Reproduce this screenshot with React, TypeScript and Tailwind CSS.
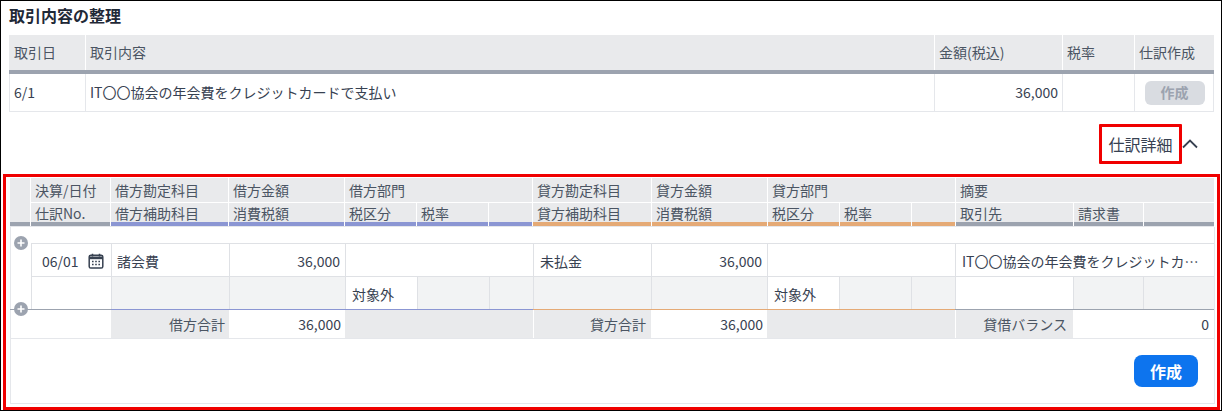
const FONT = "font-['Noto_Sans_CJK_JP','Noto_Sans',sans-serif]";

const Plus = ({ className }: { className: string }) => (
  <svg viewBox="0 0 14 14" className={`absolute w-[14px] h-[14px] ${className}`}>
    <circle cx="7" cy="7" r="7" fill="#9ca3af" />
    <path d="M7 3.5v7M3.5 7h7" stroke="#fff" strokeWidth="1.6" />
  </svg>
);

const Calendar = () => (
  <svg viewBox="0 0 16 16" className="w-4 h-4 text-[#374151]" fill="none">
    <rect x="1.2" y="2.2" width="13.6" height="12.8" rx="1.6" stroke="currentColor" strokeWidth="1.5" />
    <path d="M1.2 3.5h13.6v2.7H1.2z" fill="currentColor" />
    <path d="M4.5 0.8v2.6M11.5 0.8v2.6" stroke="currentColor" strokeWidth="1.5" />
    <path d="M4 8.5h1.6M7.2 8.5h1.6M10.4 8.5H12M4 11.5h1.6M7.2 11.5h1.6M10.4 11.5H12" stroke="currentColor" strokeWidth="1.4" />
  </svg>
);

const Head = ({ children, className = "" }: { children?: React.ReactNode; className?: string }) => (
  <div className={`bg-[#e9eaec] border-l border-white pl-[4px] flex items-center text-[#4b5563] whitespace-nowrap ${className}`}>{children}</div>
);

const Cell = ({ children, className = "" }: { children?: React.ReactNode; className?: string }) => (
  <div className={`border-l border-t border-[#dfe1e5] flex items-center whitespace-nowrap overflow-hidden pt-[1px] ${className}`}>{children}</div>
);

const HEAD_GRID = "grid grid-cols-[20px_80px_118px_116px_72px_72px_44px_119px_116px_72px_72px_44px_118px_70px_71px]";
const BODY_GRID = "grid grid-cols-[21px_80px_118px_116px_72px_72px_44px_118px_116px_72px_72px_44px_118px_70px_71px]";

export default function App() {
  return (
    <div className={`${FONT} w-[1222px] h-[411px] border border-black bg-white text-[14px] text-[#374151] overflow-hidden`}>
      <h2 className="h-[34px] pl-2 pt-[3px] text-[16px] leading-[22px] font-bold text-[#1f2937]">取引内容の整理</h2>

      <div className="mx-2 w-[1205px]">
        <div className="grid grid-cols-[76px_849px_128px_72px_80px] h-[35px]">
          <Head className="border-l-0 pl-[5px]">取引日</Head>
          <Head>取引内容</Head>
          <Head>金額(税込)</Head>
          <Head>税率</Head>
          <Head>仕訳作成</Head>
        </div>
        <div className="h-[4px] bg-[#9ca3af]" />
        <div className="grid grid-cols-[76px_849px_128px_72px_80px] h-[38px] border-b border-r border-[#e5e7eb]">
          <div className="border-l border-[#e5e7eb] pl-[4px] flex items-center">6/1</div>
          <div className="border-l border-[#e5e7eb] pl-[4px] flex items-center">IT〇〇協会の年会費をクレジットカードで支払い</div>
          <div className="border-l border-[#e5e7eb] pr-[4px] flex items-center justify-end">36,000</div>
          <div className="border-l border-[#e5e7eb]" />
          <div className="border-l border-[#e5e7eb] flex items-center justify-center">
            <button className="w-[60px] h-6 rounded-md bg-[#d9dce1] text-[#9ca3af] font-bold text-[14px]">作成</button>
          </div>
        </div>
      </div>

      <div className="h-[62px] flex items-center justify-end pr-[23px] pt-[1px]">
        <div className="h-[40px] w-[83px] border-[3px] border-[#f00000] rounded-[1px] flex items-center justify-center text-[16px] text-[#374151]">仕訳詳細</div>
        <svg viewBox="0 0 16 16" className="w-4 h-4 text-[#374151]" fill="none">
          <path d="M1 11.5L8 4.5l7 7" stroke="currentColor" strokeWidth="1.8" />
        </svg>
      </div>

      <div className="ml-[2px] w-[1217px] h-[236px] border-[3px] border-[#f00000] pl-[4px] pt-[1px] leading-[20px]">
        <div className={`${HEAD_GRID} w-[1204px] grid-rows-[24px_20px]`}>
          <Head className="row-span-2 border-l-0" />
          <Head>決算/日付</Head>
          <Head>借方勘定科目</Head>
          <Head>借方金額</Head>
          <Head className="col-span-3">借方部門</Head>
          <Head>貸方勘定科目</Head>
          <Head>貸方金額</Head>
          <Head className="col-span-3">貸方部門</Head>
          <Head className="col-span-3">摘要</Head>
          <Head className="border-t">仕訳No.</Head>
          <Head className="border-t">借方補助科目</Head>
          <Head className="border-t">消費税額</Head>
          <Head className="border-t">税区分</Head>
          <Head className="border-t">税率</Head>
          <Head className="border-t" />
          <Head className="border-t">貸方補助科目</Head>
          <Head className="border-t">消費税額</Head>
          <Head className="border-t">税区分</Head>
          <Head className="border-t">税率</Head>
          <Head className="border-t" />
          <Head className="border-t">取引先</Head>
          <Head className="border-t">請求書</Head>
          <Head className="border-t" />
        </div>
        <div className={`${HEAD_GRID} w-[1204px] h-[4px] border-b border-[#e5e7eb] box-content`}>
          <div className="bg-[#9ca3af]" />
          <div className="bg-[#9ca3af] border-l border-white" />
          {Array.from({ length: 5 }).map((_, i) => <div key={i} className="bg-[#8b96d3] border-l border-white" />)}
          {Array.from({ length: 5 }).map((_, i) => <div key={i} className="bg-[#e5aa76] border-l border-white" />)}
          {Array.from({ length: 3 }).map((_, i) => <div key={i} className="bg-[#9ca3af] border-l border-white" />)}
        </div>

        <div className="relative w-[1205px] border-b border-[#e5e7eb] h-[177px] shadow-[inset_1px_0_0_#e5e7eb,inset_-1px_0_0_#e5e7eb]">
          <div className="h-[16px]" />
          <div className={`${BODY_GRID} grid-rows-[33px_33px_1px_28px] w-[1204px]`}>
            <div className="row-span-2" />
            <Cell className="justify-between pl-[10px] pr-[7px]">
              <span>06/01</span>
              <Calendar />
            </Cell>
            <Cell className="pl-[5px]">諸会費</Cell>
            <Cell className="justify-end pr-[5px]">36,000</Cell>
            <Cell className="col-span-3" />
            <Cell className="pl-[6px]">未払金</Cell>
            <Cell className="justify-end pr-[5px]">36,000</Cell>
            <Cell className="col-span-3" />
            <Cell className="col-span-3 pl-[6px]">
              <span className="truncate w-[238px] block">IT〇〇協会の年会費をクレジットカードで支払い</span>
            </Cell>

            <Cell />
            <Cell className="bg-[#f2f3f4]" />
            <Cell className="bg-[#f2f3f4]" />
            <Cell className="pl-[6px]">対象外</Cell>
            <Cell className="bg-[#f2f3f4]" />
            <Cell className="bg-[#f2f3f4]" />
            <Cell className="bg-[#f2f3f4]" />
            <Cell className="bg-[#f2f3f4]" />
            <Cell className="pl-[6px]">対象外</Cell>
            <Cell className="bg-[#f2f3f4]" />
            <Cell className="bg-[#f2f3f4]" />
            <Cell />
            <Cell className="bg-[#f2f3f4]" />
            <Cell className="bg-[#f2f3f4]" />

            <div className="col-span-2 bg-[#9ca3af]" />
            <div className="col-span-5 bg-[#8b96d3]" />
            <div className="col-span-5 bg-[#e5aa76]" />
            <div className="col-span-3 bg-[#9ca3af]" />

            <div className="col-span-2" />
            <div className="bg-[#e9eaec] flex items-center justify-end pr-[4px] text-[#4b5563]">借方合計</div>
            <div className="flex items-center justify-end pr-[4px]">36,000</div>
            <div className="col-span-3 bg-[#e9eaec]" />
            <div className="bg-[#e9eaec] border-l border-white flex items-center justify-end pr-[5px] text-[#4b5563]">貸方合計</div>
            <div className="flex items-center justify-end pr-[4px]">36,000</div>
            <div className="col-span-3 bg-[#e9eaec]" />
            <div className="bg-[#e9eaec] border-l border-white flex items-center justify-end pr-[6px] text-[#4b5563]">貸借バランス</div>
            <div className="col-span-2 flex items-center justify-end pr-[5px]">0</div>
          </div>
          <div className="border-t border-[#e5e7eb] h-[65px] flex items-start justify-end pr-[17px] pt-[16px]">
            <button className="w-[64px] h-[32px] rounded-lg bg-[#0d74ee] text-white font-bold text-[16px]">作成</button>
          </div>
          <Plus className="left-[4px] top-[9px]" />
          <Plus className="left-[4px] top-[75px]" />
        </div>
      </div>
    </div>
  );
}
